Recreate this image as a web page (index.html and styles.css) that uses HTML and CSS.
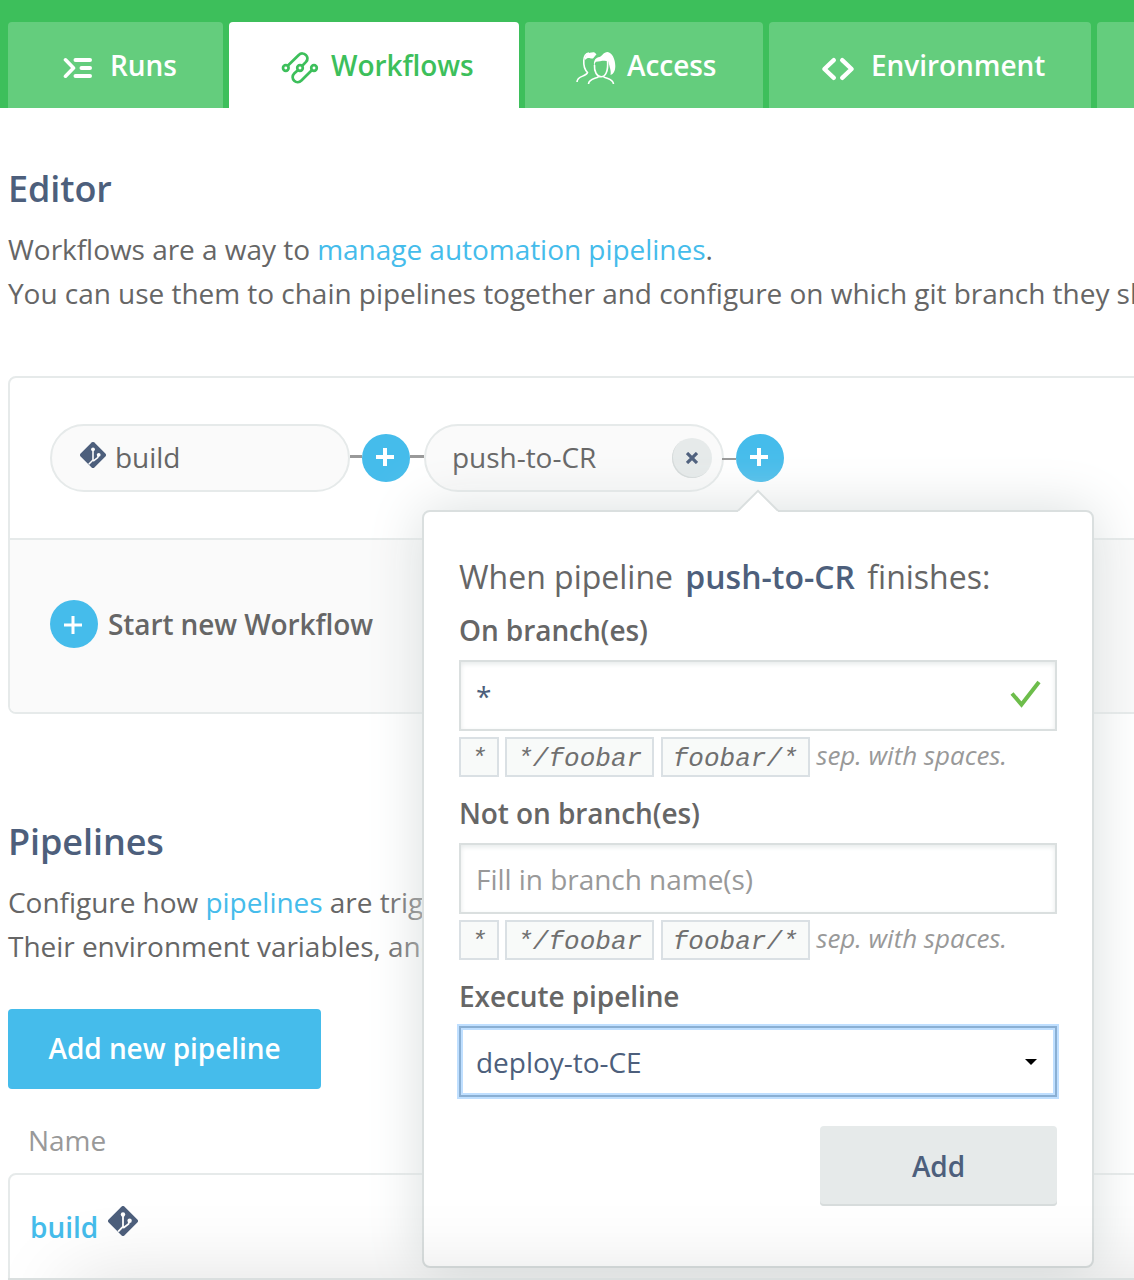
FILE: index.html
```html
<!DOCTYPE html>
<html lang="en">
<head>
<meta charset="utf-8">
<title>Workflows</title>
<link rel="stylesheet" href="styles.css">
</head>
<body>
<svg class="defs" width="0" height="0">
  <symbol id="git" viewBox="0 0 30 30">
    <path d="M13.4.7a2.3 2.3 0 0 1 3.2 0l12.7 12.7a2.3 2.3 0 0 1 0 3.2L16.6 29.3a2.3 2.3 0 0 1-3.2 0L.7 16.6a2.3 2.3 0 0 1 0-3.2z" fill="#4d5f7c"/>
    <path d="M15 8.5v12.2l-4.900 5M21.500 14.800l-1 3.200-5.300 4" fill="none" stroke="#fff" stroke-width="1.800"/>
    <circle cx="15" cy="8.5" r="2.2" fill="#fff"/><circle cx="21.6" cy="14.8" r="2.2" fill="#fff"/>
  </symbol>
</svg>
<nav class="tabs">
  <a class="tab tab-runs">
    <svg width="30" height="22" viewBox="0 0 30 22" fill="none" stroke="#fff" stroke-width="4" stroke-linecap="round" stroke-linejoin="round"><path d="M2.500 2.800l8 8.200-8 8.200" stroke-width="3.600"/><path d="M12.500 3H27M18.500 11H27M12.500 19H27"/></svg>
    <span>Runs</span>
  </a>
  <a class="tab tab-workflows active">
    <svg width="38" height="34" viewBox="0 0 38 34" fill="none" stroke="#3dbf5b" stroke-width="2.700"><path d="M7 14.500L17.500 4.200C20 1.700 23 2.200 24.800 3.900 27 6.200 26.800 8.800 25 10.900L21.500 14.500M16.500 19.500L13.200 22.500C11 24.800 11.200 27.800 13.200 29.700 15.300 31.700 18.300 31.600 20.400 29.500L31 19"/><circle cx="4.800" cy="17" r="2.800"/><circle cx="19" cy="17" r="2.800"/><circle cx="33" cy="17" r="2.800"/></svg>
    <span>Workflows</span>
  </a>
  <a class="tab tab-access">
    <svg width="40" height="34" viewBox="0 0 40 34" fill="none" stroke="#fff" stroke-width="1.600"><path d="M1 31c0-6.500 9-5 10.500-9.500C8.500 18.500 7.500 14 7.800 9.500 8 5.500 9.800 2.500 13 2"/><path d="M9 9C8.300 4 12.500 1 18.500 1.400L20.500 3.200 17 7.500C13.500 8 12.500 5.500 9 9z" fill="#fff" stroke="none"/><path d="M18.500 14c-.5 7 2.600 11.700 6.700 11.700S32.500 20.500 31.500 9.500M12.500 33c.5-6 8.300-5 10.500-7.800M37.500 33c-.5-6-8-5-10.500-7.800"/><path d="M18 14C17.500 9 20 6.500 23.500 6 26.500 4.800 27.500 1.200 31.500 1 36 1.500 39.300 8 39.300 15 39.300 20 37.500 23 34.500 24 35.500 20 33.500 16 32.300 10.500 29 9 23.500 10.500 20 10.800 18.900 11.600 18.700 12.700 18.700 14z" fill="#fff" stroke="none"/></svg>
    <span>Access</span>
  </a>
  <a class="tab tab-env">
    <svg width="34" height="24" viewBox="0 0 34 24" fill="none" stroke="#fff" stroke-width="4.400" stroke-linecap="round" stroke-linejoin="round"><path d="M12.800 3.200L3.400 12l9.400 8.800M21.200 3.200L30.600 12l-9.400 8.800"/></svg>
    <span>Environment</span>
  </a>
  <a class="tab tab-next"></a>
</nav>

<main>
  <section class="editor">
    <h2>Editor</h2>
    <p>Workflows are a way to <a>manage automation pipelines</a>.<br>You can use them to chain pipelines together and configure on which git branch they should run.</p>
    <div class="card">
      <div class="chain">
        <div class="pill pill-git"><svg width="26" height="26"><use href="#git"/></svg><span>build</span></div>
        <i class="link link-a"></i>
        <b class="plus"><svg width="18" height="18"><path d="M9 0V18M0 9H18" stroke="#fff" stroke-width="4"/></svg></b>
        <i class="link link-b"></i>
        <div class="pill pill-push"><span>push-to-CR</span>
          <b class="remove"><svg width="12" height="12"><path d="M1 1L11 11M11 1L1 11" stroke="#4d5f7c" stroke-width="3.200"/></svg></b>
        </div>
        <i class="link link-c"></i>
        <div class="plus">
          <svg width="18" height="18"><path d="M9 0V18M0 9H18" stroke="#fff" stroke-width="4"/></svg>
          <div class="popover">
            <svg class="arrow" width="42" height="24" viewBox="0 0 42 24"><path d="M1 22L21 2 41 22V24H1z" fill="#fff"/><path d="M1 21.800L21 1.800 41 21.800" fill="none" stroke="#dadfdf" stroke-width="2"/></svg>
            <h3>When pipeline <strong>push-to-CR</strong> finishes:</h3>
            <label>On branch(es)</label>
            <div class="input filled"><span>*</span><svg width="32" height="28" viewBox="0 0 32 28"><path d="M2 13.500L11.500 24.500 29 2" fill="none" stroke="#6dbd4b" stroke-width="4"/></svg></div>
            <div class="hints"><code>*</code><code>*/foobar</code><code>foobar/*</code><em>sep. with spaces.</em></div>
            <label>Not on branch(es)</label>
            <div class="input placeholder"><span>Fill in branch name(s)</span></div>
            <div class="hints"><code>*</code><code>*/foobar</code><code>foobar/*</code><em>sep. with spaces.</em></div>
            <label>Execute pipeline</label>
            <div class="input select"><span>deploy-to-CE</span><svg width="12" height="6"><path d="M0 0H12L6 6z"/></svg></div>
            <button class="add">Add</button>
          </div>
        </div>
      </div>
      <div class="start">
        <b class="plus"><svg width="18" height="18"><path d="M9 0V18M0 9H18" stroke="#fff" stroke-width="3"/></svg></b>
        <span>Start new Workflow</span>
      </div>
    </div>
  </section>
  <section class="pipelines">
    <h2>Pipelines</h2>
    <p>Configure how <a>pipelines</a> are triggered.<br>Their environment variables, and more.</p>
    <button class="new">Add new pipeline</button>
    <div class="col-name">Name</div>
    <div class="table"><a>build</a><svg width="30" height="30"><use href="#git"/></svg></div>
  </section>
</main>
<div class="bottom-bar"></div>
</body>
</html>
```

FILE: styles.css
```css
* { box-sizing: border-box; }
html, body { height: 1280px; overflow: hidden; }
body {
  position: relative;
  margin: 0;
  background: #fff;
  color: #666;
  font: 28px/44px "Open Sans", sans-serif;
  letter-spacing: -.035px;
  white-space: nowrap;
}
svg { display: block; flex: none; }
.defs { position: absolute; }
a { color: #45bceb; }

.tabs {
  display: flex;
  gap: 6px;
  height: 108px;
  padding: 22px 0 0 8px;
  background: #3dbf5b;
}
.tab {
  display: flex;
  flex: none;
  align-items: center;
  height: 86px;
  border-radius: 4px 4px 0 0;
  background: #64cd7d;
  color: #fff;
  font-weight: 600;
  letter-spacing: -.06px;
}
.tab svg { margin-top: 5px; }
.tab.active { background: #fff; color: #3dbf5b; }
.tab-runs { width: 215px; padding-left: 55px; gap: 17px; }
.tab-workflows { width: 290px; padding-left: 52px; gap: 12px; }
.tab-access { width: 238px; padding-left: 51px; gap: 11px; }
.tab-env { width: 322px; padding-left: 52px; gap: 16px; }
.tab-env svg { margin-top: 8px; }
.tab-next { width: 200px; }

main { padding: 59px 0 0 8px; }
h2 {
  margin: 0;
  height: 60px;
  color: #4d5f7c;
  font-size: 36px;
  font-weight: 600;
  line-height: 44px;
  letter-spacing: -.08px;
}
p { margin: 0; height: 88px; }

.card {
  width: 1400px;
  height: 338px;
  margin-top: 61px;
  border: 2px solid #e6eaea;
  border-radius: 8px;
}
.chain { display: flex; align-items: center; height: 160px; padding-left: 40px; }
.pill {
  display: flex;
  align-items: center;
  width: 300px;
  height: 68px;
  border: 2px solid #e6eaea;
  border-radius: 34px;
  background: #fafafa;
}
.pill span { margin-top: -2px; }
.pill-git { padding-left: 28px; gap: 9px; }
.pill-git svg { margin-top: -6px; }
.pill-push { justify-content: space-between; padding: 0 10px 0 26px; }
.remove {
  display: flex;
  align-items: center;
  justify-content: center;
  width: 40px;
  height: 40px;
  border-radius: 50%;
  background: #e6eaea;
  box-shadow: inset 1px -1px 0 #d5dada;
}
.link { height: 3px; margin-top: -3px; background: #999; }
.link-a { width: 12px; }
.link-b { width: 14px; }
.link-c { width: 14px; height: 2px; margin: 2px 0 0 -2px; }
.plus {
  position: relative;
  display: flex;
  flex: none;
  align-items: center;
  justify-content: center;
  width: 48px;
  height: 48px;
  border-radius: 50%;
  background: #45bceb;
}
.plus > svg { margin: -2px 2px 0 0; }
.start {
  display: flex;
  align-items: center;
  gap: 10px;
  height: 174px;
  padding: 0 0 4px 40px;
  border-top: 2px solid #e6eaea;
  border-radius: 0 0 6px 6px;
  background: #fafafa;
  font-weight: 600;
  letter-spacing: -.1px;
}
.start .plus > svg { margin-top: 2px; }

.popover {
  position: absolute;
  z-index: 2;
  top: 76px;
  left: -314px;
  width: 672px;
  height: 758px;
  padding: 43px 35px 0;
  border: 2px solid #dadfdf;
  border-radius: 8px;
  background: #fff;
  box-shadow: 0 0 56px #d9dede;
}
.arrow { position: absolute; top: -23px; left: 313px; }
h3 {
  margin: 0;
  height: 53px;
  font-size: 32px;
  font-weight: 400;
  line-height: 44px;
  letter-spacing: 0;
}
h3 strong { margin: 0 4px; color: #4d5f7c; font-weight: 600; }
label { display: block; height: 52px; font-weight: 600; letter-spacing: -.08px; }
.input {
  display: flex;
  align-items: center;
  justify-content: space-between;
  height: 71px;
  padding: 1px 15px 0;
  border: 2px solid #dadfdf;
  background: #fff;
  box-shadow: inset 0 2px 5px #e6eaea;
  color: #4d5f7c;
}
.filled { padding-right: 13px; }
.filled svg { margin-top: -4px; }
.placeholder { color: #999; }
.hints { display: flex; align-items: flex-start; height: 60px; padding-top: 6px; }
.hints code {
  height: 40px;
  margin-right: 6.500px;
  padding: 0 10px;
  border: 2px solid #dae0e4;
  background: #f8faf9;
  color: #707070;
  font: italic 26px/40px "Courier New", "Liberation Mono", monospace;
  letter-spacing: .03px;
}
.hints em { margin-top: -4px; color: #999; font-size: 26px; }
.select {
  padding-right: 18px;
  border-color: #8aafd3;
  box-shadow: inset 0 0 0 2px #bfdfff, 0 0 0 2px #bfdfff;
}
.select svg { margin-top: 0; }
button {
  display: block;
  border: 0;
  border-radius: 4px;
  font: 600 28px/44px "Open Sans", sans-serif;
  letter-spacing: -.06px;
}
.add {
  width: 237px;
  height: 80px;
  margin: 29px 0 0 auto;
  background: #e6eaea;
  box-shadow: inset 0 -2px 0 #d7dcdc;
  color: #4d5f7c;
}

.pipelines { padding-top: 106px; }
.new {
  width: 313px;
  height: 80px;
  margin-top: 41px;
  padding-bottom: 3px;
  background: #45bceb;
  color: #fff;
}
.col-name { height: 84px; padding: 29px 0 0 20px; color: #999; }
.table {
  display: flex;
  gap: 10px;
  width: 1400px;
  height: 140px;
  padding: 30px 20px;
  border: 2px solid #e6eaea;
  border-radius: 8px;
  font-weight: 600;
}
.table svg { margin-top: 1px; }
.bottom-bar {
  position: absolute;
  z-index: 3;
  top: 1278px;
  left: 8px;
  width: 1400px;
  height: 80px;
  border: 2px solid #dadfdf;
  background: #fff;
  box-shadow: 60px 0 80px rgba(0, 0, 0, .13);
}
```
